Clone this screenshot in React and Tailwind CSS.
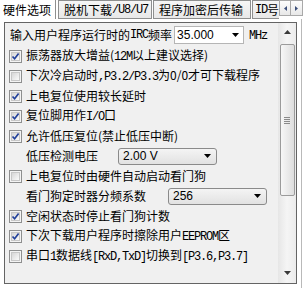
import React from "react";

// Latin runs in the original use the narrow half-width glyphs of the CJK font
const L = ({ children }) => (
  <span className="font-['Liberation_Mono',monospace] text-[12px] tracking-[-1.2px]">
    {children}
  </span>
);

const CheckBox = ({ checked }) => (
  <span className="w-[13px] h-[13px] shrink-0 border border-[#8e8f8f] bg-[#f4f4f4] p-[1px] flex">
    <span className="relative flex-1 border border-[#c7c7c7] bg-gradient-to-br from-[#d6d6d6] to-[#fbfbfb]">
      {checked && (
        <svg
          className="absolute -left-[1px] -top-[1px]"
          width="9"
          height="9"
          viewBox="0 0 9 9"
        >
          <path
            d="M1.5 4.5 L3.6 6.8 L7.6 1.6"
            fill="none"
            stroke="#21409a"
            strokeWidth="1.7"
          />
        </svg>
      )}
    </span>
  </span>
);

const DownTri = ({ color = "#000" }) => (
  <svg width="7" height="4" viewBox="0 0 7 4">
    <path d="M0 0 H7 L3.5 4 Z" fill={color} />
  </svg>
);

const Combo = ({ value, className }) => (
  <div
    className={
      "h-[17px] flex items-center justify-between pl-[4px] pr-[5px] rounded-[3px] border border-[#8a8a8a] bg-gradient-to-b from-[#f4f4f4] to-[#e2e2e2] " +
      className
    }
  >
    <span className="font-['Liberation_Sans',sans-serif] text-[12px]">{value}</span>
    <DownTri />
  </div>
);

const rows = [
  { checked: true, label: <>振荡器放大增益(<L>12M</L>以上建议选择)</> },
  { checked: false, label: <>下次冷启动时<L>,P3.2/P3.3</L>为0/0才可下载程序</> },
  { checked: true, label: <>上电复位使用较长延时</> },
  { checked: true, label: <>复位脚用作<L>I/O</L>口</> },
  { checked: true, label: <>允许低压复位(禁止低压中断)</> },
  { combo: "low" },
  { checked: false, label: <>上电复位时由硬件自动启动看门狗</> },
  { combo: "wdt" },
  { checked: true, label: <>空闲状态时停止看门狗计数</> },
  { checked: true, label: <>下次下载用户程序时擦除用户<L>EEPROM</L>区</> },
  { checked: false, label: <>串口<L>1</L>数据线<L>[RxD,TxD]</L>切换到<L>[P3.6,P3.7]</L></> },
];

const Tabs = () => (
  <div className="h-[19px] flex items-stretch shrink-0">
    <div className="w-[56px] bg-white border-r border-[#8e8f8f] pl-[3px] flex items-center">
      硬件选项
    </div>
    <div className="ml-[2px] w-[94px] border border-[#8e8f8f] bg-gradient-to-b from-[#f6f6f6] to-[#e8e8e8] flex items-center pl-[5px]">
      脱机下载<L>/U8/U7</L>
    </div>
    <div className="ml-[1px] w-[98px] border border-[#8e8f8f] bg-gradient-to-b from-[#f6f6f6] to-[#e8e8e8] flex items-center pl-[5px]">
      程序加密后传输
    </div>
    <div className="ml-[1px] w-[27px] overflow-hidden whitespace-nowrap border border-r-0 border-[#8e8f8f] bg-gradient-to-b from-[#f6f6f6] to-[#e8e8e8] flex items-center pl-[2px]">
      <L>ID</L>号
    </div>
    <div className="w-[12px] h-[16px] border border-[#a9a9a9] bg-gradient-to-b from-[#fdfdfd] to-[#e8e8e8] flex items-center justify-center">
      <svg width="3" height="5" viewBox="0 0 3 5">
        <path d="M3 0 V5 L0 2.5 Z" fill="#3c4f7a" />
      </svg>
    </div>
    <div className="w-[12px] h-[16px] border border-l-0 border-[#a9a9a9] bg-gradient-to-b from-[#fdfdfd] to-[#e8e8e8] flex items-center justify-center">
      <svg width="3" height="5" viewBox="0 0 3 5">
        <path d="M0 0 V5 L3 2.5 Z" fill="#3c4f7a" />
      </svg>
    </div>
  </div>
);

const ScrollBar = () => (
  <div className="w-[18px] h-full flex flex-col items-center bg-gradient-to-r from-[#e6e6e6] via-[#f5f5f5] to-[#ebebeb]">
    <div className="h-[18px] flex items-center justify-center">
      <svg width="7" height="4" viewBox="0 0 7 4">
        <path d="M0 4 H7 L3.5 0 Z" fill="#3a3a3a" />
      </svg>
    </div>
    <div className="mt-[3px] w-[15px] h-[152px] rounded-[2px] border border-[#9b9b9b] bg-gradient-to-r from-[#f7f7f7] to-[#dedede] flex flex-col items-center justify-center gap-[1px]">
      <span className="w-[6px] h-[1px] bg-[#8a8a8a]" />
      <span className="w-[6px] h-[1px] bg-[#8a8a8a]" />
      <span className="w-[6px] h-[1px] bg-[#8a8a8a]" />
      <span className="w-[6px] h-[1px] bg-[#8a8a8a]" />
    </div>
    <div className="flex-1" />
    <div className="h-[20px] flex items-center justify-center">
      <DownTri color="#3a3a3a" />
    </div>
  </div>
);

const App = () => {
  return (
    <div className="w-[304px] h-[288px] bg-white overflow-hidden flex flex-col text-[12px] leading-none text-black font-['Noto_Sans_CJK_SC',sans-serif]">
      <Tabs />
      <div className="flex-1 w-[302px] border-r border-[#b9b9b9] pt-[3px] pl-[4px]">
        <div className="w-[293px] h-[262px] border border-[#646464] bg-[#f0f0f0] flex">
          <div className="flex-1 flex flex-col whitespace-nowrap">
            <div className="h-[23px] flex items-center pl-[5px]">
              输入用户程序运行时的<L>IRC</L>频率
              <div className="ml-[2px] w-[70px] h-[18px] bg-white border border-[#b5b5b5] flex items-center justify-between pl-[2px] pr-[4px]">
                <span className="font-['Liberation_Sans',sans-serif] text-[12px]">35.000</span>
                <DownTri />
              </div>
              <span className="ml-[5px]">
                <L>MHz</L>
              </span>
            </div>
            {rows.map((row, i) =>
              row.combo ? (
                <div key={i} className="h-[20px] flex items-center pl-[21px]">
                  {row.combo === "low" ? (
                    <>
                      低压检测电压
                      <Combo value="2.00 V" className="ml-[20px] w-[99px]" />
                    </>
                  ) : (
                    <>
                      看门狗定时器分频系数
                      <Combo value="256" className="ml-[22px] w-[99px]" />
                    </>
                  )}
                </div>
              ) : (
                <div key={i} className="h-[20px] flex items-center pl-[4px]">
                  <CheckBox checked={row.checked} />
                  <span className="ml-[4px]">{row.label}</span>
                </div>
              )
            )}
          </div>
          <ScrollBar />
        </div>
      </div>
    </div>
  );
};

export default App;
